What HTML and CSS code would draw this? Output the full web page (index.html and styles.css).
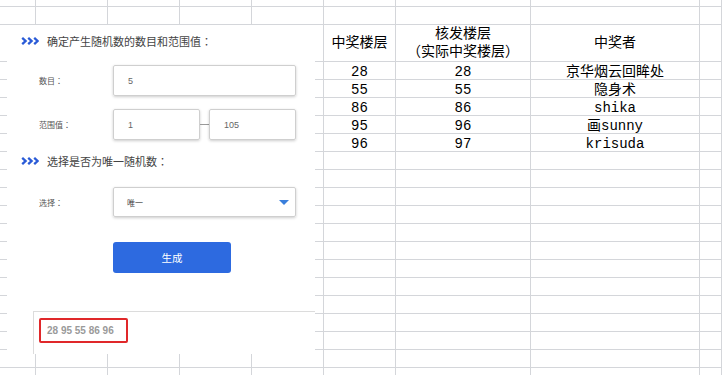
FILE: index.html
```html
<!DOCTYPE html>
<html lang="zh-CN">
<head>
    <meta charset="UTF-8">
    <meta name="viewport" content="width=device-width, initial-scale=1.0">
    <title>随机数生成</title>
    <link rel="stylesheet" href="styles.css">
</head>
<body>
    <div class="sheet">
        <table class="grid">
            <colgroup>
                <col class="col-a">
                <col class="col-b"><col class="col-b"><col class="col-b"><col class="col-b">
                <col class="col-b">
                <col class="col-c">
                <col class="col-d">
                <col class="col-e">
            </colgroup>
            <tr class="row-top"><td></td><td></td><td></td><td></td><td></td><td></td><td></td><td></td><td></td></tr>
            <tr class="row"><td></td><td></td><td></td><td></td><td></td><td></td><td></td><td></td><td></td></tr>
            <tr class="row-head">
                <td></td><td></td><td></td><td></td><td></td>
                <td>中奖楼层</td>
                <td>核发楼层<br>（实际中奖楼层）</td>
                <td>中奖者</td>
                <td></td>
            </tr>
            <tr class="row data"><td></td><td></td><td></td><td></td><td></td><td>28</td><td>28</td><td>京华烟云回眸处</td><td></td></tr>
            <tr class="row data"><td></td><td></td><td></td><td></td><td></td><td>55</td><td>55</td><td>隐身术</td><td></td></tr>
            <tr class="row data"><td></td><td></td><td></td><td></td><td></td><td>86</td><td>86</td><td>shika</td><td></td></tr>
            <tr class="row data"><td></td><td></td><td></td><td></td><td></td><td>95</td><td>96</td><td>画sunny</td><td></td></tr>
            <tr class="row data"><td></td><td></td><td></td><td></td><td></td><td>96</td><td>97</td><td>krisuda</td><td></td></tr>
            <tr class="row"><td></td><td></td><td></td><td></td><td></td><td></td><td></td><td></td><td></td></tr>
            <tr class="row"><td></td><td></td><td></td><td></td><td></td><td></td><td></td><td></td><td></td></tr>
            <tr class="row"><td></td><td></td><td></td><td></td><td></td><td></td><td></td><td></td><td></td></tr>
            <tr class="row"><td></td><td></td><td></td><td></td><td></td><td></td><td></td><td></td><td></td></tr>
            <tr class="row"><td></td><td></td><td></td><td></td><td></td><td></td><td></td><td></td><td></td></tr>
            <tr class="row"><td></td><td></td><td></td><td></td><td></td><td></td><td></td><td></td><td></td></tr>
            <tr class="row"><td></td><td></td><td></td><td></td><td></td><td></td><td></td><td></td><td></td></tr>
            <tr class="row"><td></td><td></td><td></td><td></td><td></td><td></td><td></td><td></td><td></td></tr>
            <tr class="row"><td></td><td></td><td></td><td></td><td></td><td></td><td></td><td></td><td></td></tr>
            <tr class="row"><td></td><td></td><td></td><td></td><td></td><td></td><td></td><td></td><td></td></tr>
            <tr class="row"><td></td><td></td><td></td><td></td><td></td><td></td><td></td><td></td><td></td></tr>
            <tr class="row"><td></td><td></td><td></td><td></td><td></td><td></td><td></td><td></td><td></td></tr>
            <tr class="row"><td></td><td></td><td></td><td></td><td></td><td></td><td></td><td></td><td></td></tr>
        </table>

        <!-- 粘贴在表格上面的生成器截图 -->
        <div class="panel" lang="ja">
            <div class="section-title">
                <svg class="chevrons" width="18" height="8" viewBox="0 0 18 8">
                    <path d="M1.2 0.8l3.4 3.2-3.4 3.2M7.2 0.8l3.4 3.2-3.4 3.2M13.2 0.8l3.4 3.2-3.4 3.2" fill="none" stroke="#2a5bd7" stroke-width="2.3"/>
                </svg>
                <span>确定产生随机数的数目和范围值：</span>
            </div>
            <div class="field first">
                <span class="field-label">数目：</span>
                <div class="input wide">5</div>
            </div>
            <div class="field">
                <span class="field-label">范围值：</span>
                <div class="input half">1</div>
                <span class="dash"></span>
                <div class="input half">105</div>
            </div>
            <div class="section-title second">
                <svg class="chevrons" width="18" height="8" viewBox="0 0 18 8">
                    <path d="M1.2 0.8l3.4 3.2-3.4 3.2M7.2 0.8l3.4 3.2-3.4 3.2M13.2 0.8l3.4 3.2-3.4 3.2" fill="none" stroke="#2a5bd7" stroke-width="2.3"/>
                </svg>
                <span>选择是否为唯一随机数：</span>
            </div>
            <div class="field choose">
                <span class="field-label">选择：</span>
                <div class="input wide select">唯一<span class="caret"></span></div>
            </div>
            <div class="actions">
                <button class="generate">生成</button>
            </div>
            <div class="result">
                <span class="result-box">28 95 55 86 96</span>
            </div>
        </div>
    </div>
</body>
</html>
```

FILE: styles.css
```css
html, body {
    margin: 0;
    padding: 0;
    overflow: hidden;
    background-color: #fff;
}

.sheet {
    position: relative;
    width: 722px;
    height: 375px;
    overflow: hidden;
}

.grid {
    table-layout: fixed;
    width: 722px;
    border-collapse: separate;
    border-spacing: 0;
    font-family: "Liberation Mono", "Noto Sans CJK SC", monospace;
    font-size: 14px;
    color: #000;
}

.col-a { width: 36px; }
.col-b { width: 72px; }
.col-c { width: 135px; }
.col-d { width: 169px; }
.col-e { width: 22px; }

.grid td {
    padding: 0;
    border-right: 1px solid #d4d6da;
    border-bottom: 1px solid #d4d6da;
    text-align: center;
    white-space: nowrap;
    overflow: hidden;
    box-sizing: border-box;
}

.row-top td {
    height: 7px;
}

.row td {
    height: 18px;
}

.row-head td {
    height: 36px;
    line-height: 18px;
    vertical-align: middle;
}

.data td {
    line-height: 14px;
    vertical-align: bottom;
}

/* 左边的白色面板 */
.panel {
    position: absolute;
    left: 7px;
    top: 25px;
    width: 308px;
    height: 329px;
    background-color: #fff;
    overflow: hidden;
    font-family: "Noto Sans CJK JP", "Liberation Sans", sans-serif;
}

.section-title {
    display: flex;
    align-items: center;
    height: 16px;
    margin-top: 8px;
    padding-left: 14px;
    font-size: 11px;
    color: #444;
}

.section-title.second {
    margin-top: 13px;
}

.chevrons {
    margin-right: 8px;
}

.field {
    display: flex;
    align-items: center;
    margin-top: 13px;
    padding-left: 32px;
}

.field.first {
    margin-top: 16px;
}

.field.choose {
    margin-top: 18px;
}

.field-label {
    width: 74px;
    font-size: 8px;
    color: #555;
}

.input {
    box-sizing: border-box;
    height: 31px;
    display: flex;
    align-items: center;
    padding-left: 14px;
    border: 1px solid #cfcfcf;
    border-radius: 2px;
    box-shadow: 0 1px 3px rgba(0, 0, 0, 0.2);
    font-family: "Liberation Sans", "Noto Sans CJK JP", sans-serif;
    font-size: 9px;
    color: #666;
}

.input.wide {
    width: 183px;
}

.input.half {
    width: 87px;
}

.dash {
    width: 9px;
    height: 1px;
    background-color: #999;
}

.select {
    height: 30px;
    padding-left: 13px;
    padding-right: 6px;
    justify-content: space-between;
    font-size: 8px;
    color: #444;
}

.caret {
    width: 0;
    height: 0;
    border-left: 5px solid transparent;
    border-right: 5px solid transparent;
    border-top: 5px solid #3a7fdc;
}

.actions {
    margin-top: 25px;
    padding-left: 106px;
}

.generate {
    display: block;
    width: 118px;
    height: 31px;
    border: none;
    border-radius: 3px;
    background-color: #2d6ae0;
    color: #fff;
    font-family: "Noto Sans CJK JP", sans-serif;
    font-size: 10.5px;
    padding: 0;
}

.result {
    margin-top: 38px;
    margin-left: 26px;
    height: 60px;
    padding: 6px 0 0 5px;
    border-top: 1px solid #dcdcdc;
    border-left: 1px solid #dcdcdc;
}

.result-box {
    box-sizing: border-box;
    display: flex;
    align-items: center;
    width: 89px;
    height: 25px;
    padding-left: 6px;
    border: 2px solid #e0282a;
    border-radius: 2px;
    font-family: "Liberation Sans", sans-serif;
    font-size: 10px;
    font-weight: bold;
    color: #9a9a9a;
}
```
